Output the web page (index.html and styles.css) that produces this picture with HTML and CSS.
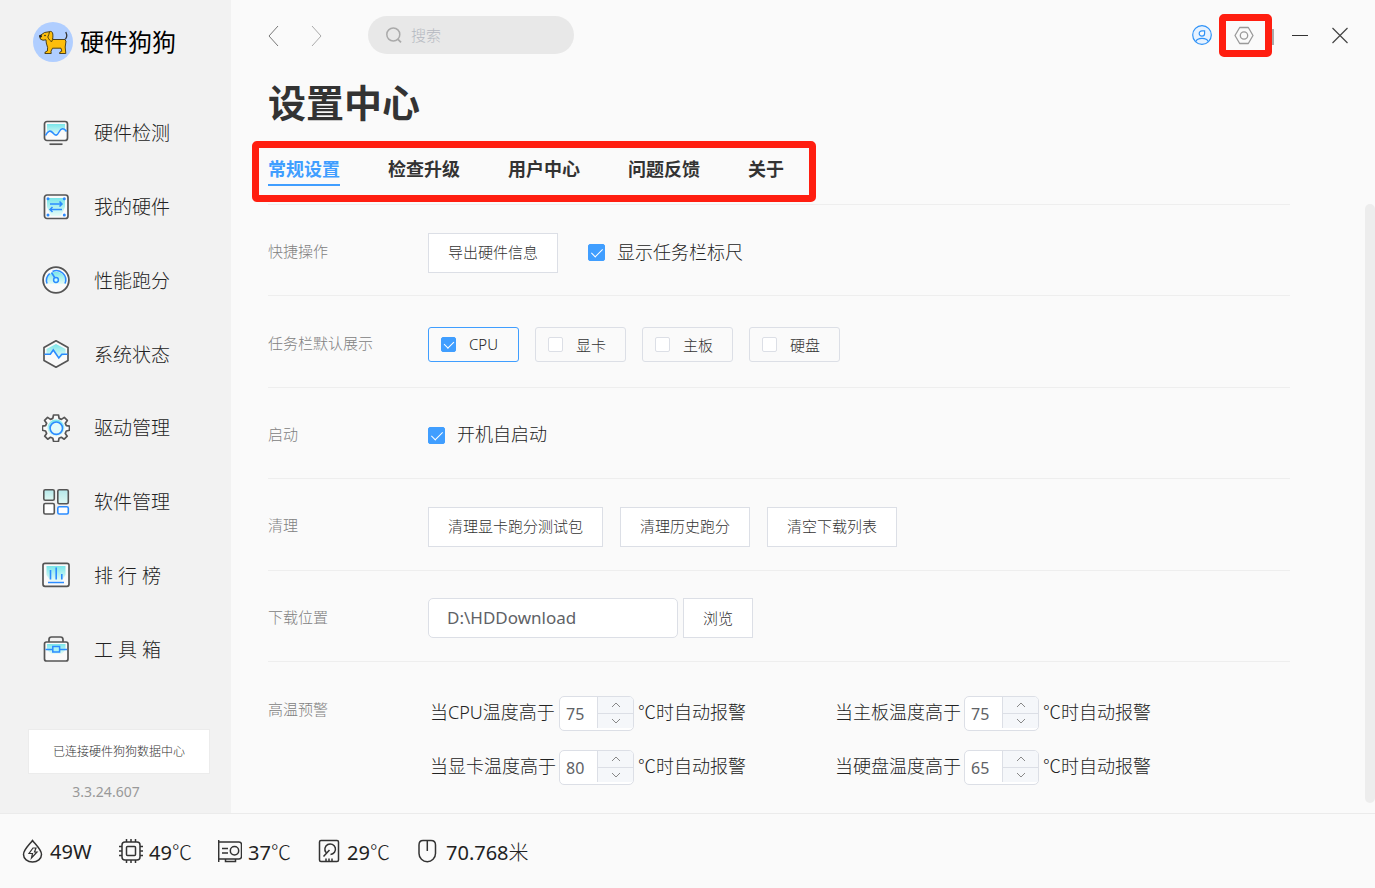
FILE: index.html
```html
<!DOCTYPE html>
<html lang="zh-CN">
<head>
<meta charset="utf-8">
<title>硬件狗狗</title>
<link rel="stylesheet" href="styles.css">
</head>
<body>
<svg class="defs" width="0" height="0" aria-hidden="true">
  <defs>
    <linearGradient id="aqua" x1="0" y1="0" x2="0" y2="1">
      <stop offset="0" stop-color="#79e6ea"/>
      <stop offset="1" stop-color="#e6fbf6"/>
    </linearGradient>
    <linearGradient id="mint" x1="0" y1="0" x2="0" y2="1">
      <stop offset="0" stop-color="#b4e8ea"/>
      <stop offset="1" stop-color="#e0f8f2"/>
    </linearGradient>
  </defs>
</svg>
<div class="app">
  <aside class="sidebar">
    <div class="brand">
      <svg class="brand-logo" viewBox="0 0 40 40" aria-hidden="true">
        <circle cx="20" cy="20" r="20" fill="#b0ceff"/>
        <path d="M31 18c2.800-1 3.500-4.500 1.800-8" fill="none" stroke="#333" stroke-width="1.300"/>
        <path d="M6.500 14l5-3.500 5-.8L20 17.500h11.500l1.500 1.500-.8 6 .6 6.500h-6.300l.5-1.500 1.800-.8-.8-3h-8.500l-1.500 3 .2 2.300h-6.300l.3-1.500 2.200-1 .2-3.500-1.300-4.500-.3-3.200-3 .4-2.500-1z" fill="#fdbe0c" stroke="#3d3310" stroke-width=".9"/>
        <path d="M16.500 9.600c1.800-.6 3 .2 3.300 2.400.2 2.500.2 5-1 7.500-1.300 0-3-2-4-4.500 1-1.500 1.200-3.500 1.700-5.400z" fill="#fdbe0c" stroke="#3d3310" stroke-width=".9"/>
        <path d="M6 13.200l2.500-.4.500 2-2 1.200z" fill="#222"/>
        <circle cx="12" cy="13.500" r=".8" fill="#222"/>
      </svg>
      <span class="brand-name">硬件狗狗</span>
    </div>
    <nav class="menu">
      <a href="#" class="menu-item">
        <svg class="menu-icon" viewBox="0 0 28 28"><rect x="2.500" y="2.500" width="23" height="19" rx="2.500" fill="#fafafa" stroke="#555" stroke-width="1.700"/><path d="M5 5h18v8c-3-4-5-4-7 0s-4 4-6 1-4-2-5 0z" fill="url(#aqua)"/><path d="M3.500 16.500C6 11.500 8.500 11 11 14s4 3 6-1 5-4.500 7.500-.5" fill="none" stroke="#2b8cff" stroke-width="1.600"/><path d="M7.500 25.200h13" stroke="#555" stroke-width="1.700"/></svg>
        <span>硬件检测</span></a>
      <a href="#" class="menu-item">
        <svg class="menu-icon" viewBox="0 0 28 28"><rect x="2.500" y="2" width="23.500" height="23.500" rx="2.500" fill="#fafafa" stroke="#555" stroke-width="1.700"/><path d="M5 5h18v9l-4 9H9l-4-9z" fill="url(#aqua)"/><g fill="#2b8cff"><circle cx="6" cy="5.800" r="1.500"/><circle cx="22.300" cy="5.800" r="1.500"/><circle cx="6" cy="22" r="1.500"/><circle cx="22.300" cy="22" r="1.500"/></g><path d="M8 11h12M17.500 8.500L20 11l-2.500 2.500M20 16.500H8M10.500 14L8 16.500l2.500 2.500" fill="none" stroke="#2b8cff" stroke-width="1.500"/></svg>
        <span>我的硬件</span></a>
      <a href="#" class="menu-item">
        <svg class="menu-icon" viewBox="0 0 28 28"><circle cx="14" cy="14" r="12.900" fill="#fafafa" stroke="#555" stroke-width="1.800"/><path d="M4.500 18a9.800 9.800 0 1 1 19 0z" fill="url(#aqua)"/><path d="M5 17.500a9.300 9.300 0 0 1 2.700-10M10.500 5.500a9.300 9.300 0 0 1 12.500 12M9.500 6.500l3.300 5.200" fill="none" stroke="#2b8cff" stroke-width="1.600"/><circle cx="14" cy="14" r="2.400" fill="#cff" stroke="#2b8cff" stroke-width="1.500"/></svg>
        <span>性能跑分</span></a>
      <a href="#" class="menu-item">
        <svg class="menu-icon" viewBox="0 0 28 28"><path d="M14 .8l12 6.600v13.200l-12 6.600-12-6.600V7.400z" fill="#fafafa" stroke="#555" stroke-width="1.700" stroke-linejoin="round"/><path d="M14 4l9.500 5v5l-5 4-3-1-4-6-4 3h-3V9z" fill="url(#aqua)"/><path d="M2.500 14.200h5.800l3-4.200 5.500 8 3-3.800h5.700" fill="none" stroke="#2b8cff" stroke-width="1.600"/></svg>
        <span>系统状态</span></a>
      <a href="#" class="menu-item">
        <svg class="menu-icon" viewBox="0 0 28 28"><path d="M11.500 1h5l.6 3.400 2.300 1 2.900-2 3 3-2 2.900 1 2.300 3.200.6v4l-3.200.8-1 2.400 1.900 2.800-3 3-2.900-1.900-2.300 1-.6 3.200h-4.800l-.8-3.200-2.300-1-2.800 1.900-3-3 1.900-2.800-1-2.400-3.200-.8v-4l3.200-.6 1-2.300-2-2.900 3-3 2.900 2 2.300-1z" fill="#fafafa" stroke="#555" stroke-width="1.700" stroke-linejoin="round"/><circle cx="14" cy="14" r="8.500" fill="url(#aqua)"/><circle cx="14.300" cy="14.200" r="6.200" fill="#e2fafa" stroke="#2b8cff" stroke-width="1.600"/></svg>
        <span>驱动管理</span></a>
      <a href="#" class="menu-item">
        <svg class="menu-icon" viewBox="0 0 28 28"><g stroke="#555" stroke-width="1.600"><rect x="1.800" y="1.800" width="10.500" height="10.500" rx="1.500" fill="url(#mint)"/><rect x="15.800" y="1.800" width="10.500" height="14" rx="1.500" fill="url(#mint)"/><rect x="1.800" y="15.500" width="10.500" height="10.500" rx="1.500" fill="#fff"/></g><rect x="15.800" y="18.800" width="10.500" height="7.200" rx="1.500" fill="#fff" stroke="#2b8cff" stroke-width="1.600"/></svg>
        <span>软件管理</span></a>
      <a href="#" class="menu-item">
        <svg class="menu-icon" viewBox="0 0 28 28"><rect x="1" y="2.300" width="26" height="23" rx="2" fill="#fafafa" stroke="#555" stroke-width="1.700"/><path d="M4.500 5h19v9l-4 6h-11l-4-6z" fill="url(#aqua)"/><path d="M8.500 9v9.500M14.200 6.500v12M19.800 13v5.500M6 21.500h16" stroke="#2b8cff" stroke-width="1.600"/></svg>
        <span>排 行 榜</span></a>
      <a href="#" class="menu-item">
        <svg class="menu-icon" viewBox="0 0 28 28"><path d="M7 7V4.500Q7 2 9.500 2h9Q21 2 21 4.500V7" fill="none" stroke="#555" stroke-width="1.700"/><rect x="2.500" y="7" width="23.500" height="19" rx="2" fill="#fafafa" stroke="#555" stroke-width="1.700"/><path d="M5 9h18.500v6l-4 4h-10L5 15z" fill="url(#aqua)"/><path d="M3.500 14.500h7M17.500 14.500H25" stroke="#2b8cff" stroke-width="1.500"/><rect x="10.800" y="11.500" width="6.800" height="5.500" fill="#aef3f3" stroke="#2b8cff" stroke-width="1.500"/></svg>
        <span>工 具 箱</span></a>
    </nav>
    <div class="link-state">
      <div class="link-card">已连接硬件狗狗数据中心</div>
      <div class="version">3.3.24.607</div>
    </div>
  </aside>

  <main class="main">
    <header class="topbar">
      <button class="icon-button" aria-label="后退"><svg width="12" height="22" viewBox="0 0 12 22"><path d="M10 2L1 12l9 10" fill="none" stroke="#777" stroke-width="1"/></svg></button>
      <button class="icon-button forward" aria-label="前进"><svg width="12" height="22" viewBox="0 0 12 22"><path d="M1 2l9 10-9 10" fill="none" stroke="#aaa" stroke-width="1"/></svg></button>
      <label class="search">
        <svg width="16" height="16" viewBox="0 0 16 16"><circle cx="7.300" cy="7.500" r="6.500" fill="none" stroke="#aaa" stroke-width="1.500"/><path d="M12 12.300l3 3" stroke="#aaa" stroke-width="1.700"/></svg>
        <input type="text" placeholder="搜索" aria-label="搜索">
      </label>
      <div class="window-tools">
        <button class="icon-button user" aria-label="用户"><svg width="20" height="20" viewBox="0 0 20 20"><circle cx="10" cy="10" r="9.300" fill="#e6f2ff" stroke="#2f92f7" stroke-width="1.200"/><path d="M12.600 5.800v2.700a2.700 2.700 0 1 1-2.700-2.700z" fill="#fafafa" stroke="#2f92f7" stroke-width="1.200"/><path d="M3.800 16.500c1.500-4.300 10.900-4.300 12.400 0" fill="none" stroke="#2f92f7" stroke-width="1.200"/></svg></button>
        <span class="settings-wrap">
          <button class="icon-button" aria-label="设置"><svg width="20" height="20" viewBox="0 0 20 20"><path d="M5.700 2.500h8.600l4.700 8-4.700 8H5.700l-4.700-8z" fill="none" stroke="#999" stroke-width="1.300" stroke-linejoin="round"/><circle cx="10" cy="10.500" r="3.700" fill="none" stroke="#999" stroke-width="1.300"/></svg></button>
        </span>
        <span class="divider"></span>
        <button class="icon-button minimize" aria-label="最小化"><svg width="18" height="18" viewBox="0 0 18 18"><path d="M1 9.500h16" stroke="#333"/></svg></button>
        <button class="icon-button" aria-label="关闭"><svg width="18" height="18" viewBox="0 0 18 18"><path d="M1.500 2l15 15M16.500 2l-15 15" stroke="#444" stroke-width="1.200"/></svg></button>
      </div>
    </header>
    <h1 class="title">设置中心</h1>
    <nav class="tabs">
      <a href="#" class="tab active">常规设置</a>
      <a href="#" class="tab">检查升级</a>
      <a href="#" class="tab">用户中心</a>
      <a href="#" class="tab">问题反馈</a>
      <a href="#" class="tab">关于</a>
    </nav>
    <div class="scroll-area">
      <div class="settings">
        <section class="row">
          <h2 class="row-label">快捷操作</h2>
          <div class="row-body">
            <button class="btn">导出硬件信息</button>
            <label class="check ruler"><input type="checkbox" checked><span>显示任务栏标尺</span></label>
          </div>
        </section>
        <section class="row">
          <h2 class="row-label">任务栏默认展示</h2>
          <div class="row-body chips">
            <label class="chip selected"><input type="checkbox" checked>CPU</label>
            <label class="chip"><input type="checkbox">显卡</label>
            <label class="chip"><input type="checkbox">主板</label>
            <label class="chip"><input type="checkbox">硬盘</label>
          </div>
        </section>
        <section class="row">
          <h2 class="row-label">启动</h2>
          <div class="row-body">
            <label class="check"><input type="checkbox" checked><span>开机自启动</span></label>
          </div>
        </section>
        <section class="row">
          <h2 class="row-label">清理</h2>
          <div class="row-body cleanup">
            <button class="btn">清理显卡跑分测试包</button>
            <button class="btn">清理历史跑分</button>
            <button class="btn">清空下载列表</button>
          </div>
        </section>
        <section class="row">
          <h2 class="row-label">下载位置</h2>
          <div class="row-body download">
            <input class="path" type="text" value="D:\HDDownload" aria-label="下载位置">
            <button class="btn">浏览</button>
          </div>
        </section>
        <section class="row alarm-row">
          <h2 class="row-label">高温预警</h2>
          <div class="alarms">
            <div class="alarm"><label for="cpu">当CPU温度高于</label><span class="stepper"><input id="cpu" type="number" value="75"><span class="steps"><button aria-label="增加"><svg viewBox="0 0 10 6"><path d="M1 5l4-4 4 4"/></svg></button><button aria-label="减少"><svg viewBox="0 0 10 6"><path d="M1 1l4 4 4-4"/></svg></button></span></span><span class="suffix">℃时自动报警</span></div>
            <div class="alarm"><label for="board">当主板温度高于</label><span class="stepper"><input id="board" type="number" value="75"><span class="steps"><button aria-label="增加"><svg viewBox="0 0 10 6"><path d="M1 5l4-4 4 4"/></svg></button><button aria-label="减少"><svg viewBox="0 0 10 6"><path d="M1 1l4 4 4-4"/></svg></button></span></span><span class="suffix">℃时自动报警</span></div>
            <div class="alarm"><label for="gpu">当显卡温度高于</label><span class="stepper"><input id="gpu" type="number" value="80"><span class="steps"><button aria-label="增加"><svg viewBox="0 0 10 6"><path d="M1 5l4-4 4 4"/></svg></button><button aria-label="减少"><svg viewBox="0 0 10 6"><path d="M1 1l4 4 4-4"/></svg></button></span></span><span class="suffix">℃时自动报警</span></div>
            <div class="alarm"><label for="disk">当硬盘温度高于</label><span class="stepper"><input id="disk" type="number" value="65"><span class="steps"><button aria-label="增加"><svg viewBox="0 0 10 6"><path d="M1 5l4-4 4 4"/></svg></button><button aria-label="减少"><svg viewBox="0 0 10 6"><path d="M1 1l4 4 4-4"/></svg></button></span></span><span class="suffix">℃时自动报警</span></div>
          </div>
        </section>
      </div>
      <div class="scrollbar"><div class="thumb"></div></div>
    </div>
  </main>

  <footer class="status">
    <div class="stat"><svg viewBox="0 0 24 24"><path d="M12.500 1.500C10.500 4.500 3.500 10.500 3.500 15.500a9 7.500 0 0 0 18 0C21.500 10.500 14.500 4.500 12.500 1.500z"/><path d="M13 9h3l-1.500 4H17l-5.500 6 1-4.500H9z" stroke-width="1.200"/></svg><span>49W</span></div>
    <div class="stat"><svg viewBox="0 0 24 24"><rect x="3" y="3" width="18" height="18" rx="3"/><rect x="7.500" y="7.500" width="9" height="9" rx="1"/><path d="M7.500 0v3M12 0v3M16.500 0v3M7.500 21v3M12 21v3M16.500 21v3M0 7.500h3M0 12h3M0 16.500h3M21 7.500h3M21 12h3M21 16.500h3"/></svg><span>49<span class="unit">℃</span></span></div>
    <div class="stat"><svg viewBox="0 0 24 24"><path d="M.7 1v22M.7 3H21q2.500 0 2.500 2.500v12Q23.500 20 21 20H.7M7.500 20v2.500h10V20M4 9.500h6M4 14h6"/><circle cx="16.500" cy="11.700" r="4.200"/></svg><span>37<span class="unit">℃</span></span></div>
    <div class="stat"><svg viewBox="0 0 24 24"><rect x="2.500" y="1.500" width="19" height="21" rx="1.500"/><path d="M9 13.500a5.300 5.300 0 1 1 4.500 2M12.500 11L6.500 17.500M9 19.500v3M12 19.500v3M15 19.500v3"/></svg><span>29<span class="unit">℃</span></span></div>
    <div class="stat"><svg viewBox="0 0 24 24"><path d="M7 1.500h8q4.500 0 4.500 4.500v8.500a8.200 8.200 0 0 1-16.500 0V6Q3 1.500 7 1.500zM11.300 2v10"/></svg><span>70.768<span class="unit">米</span></span></div>
  </footer>
</div>
</body>
</html>
```
FILE: styles.css
```css
* { box-sizing: border-box; }

body {
  margin: 0;
  color: #222;
  background: #fafafa;
  font-family: "Noto Sans", "Noto Sans CJK SC", sans-serif;
  font-size: 15px;
  font-weight: 300;
}

.defs { display: block; }
button, input { font: inherit; color: inherit; }
button { cursor: pointer; }
a { color: inherit; text-decoration: none; }
svg { flex: none; display: block; }

.app {
  display: grid;
  grid-template-columns: 231px 1fr;
  grid-template-rows: 1fr 75px;
  min-height: 100vh;
}

/* Sidebar */
.sidebar {
  display: flex;
  flex-direction: column;
  background: #f2f2f2;
}
.brand {
  display: flex;
  align-items: center;
  gap: 7px;
  height: 96px;
  padding: 0 0 12px 33px;
}
.brand-logo { width: 40px; height: 40px; }
.brand-name {
  padding-bottom: 4px;
  color: #000;
  font-size: 24px;
  font-weight: 400;
}
.menu {
  flex: 1;
  display: grid;
  grid-auto-rows: 1fr;
}
.menu-item {
  display: flex;
  align-items: center;
  gap: 24px;
  padding-left: 42px;
  font-size: 19px;
}
.menu-item span { padding-bottom: 1px; }
.menu-icon { width: 28px; height: 28px; }
.link-state {
  height: 127px;
  padding: 43px 21px 0 28px;
}
.link-card {
  height: 45px;
  border: 1px solid #ececec;
  background: #fff;
  color: #333;
  font-size: 12px;
  line-height: 43px;
  text-align: center;
}
.version {
  padding-right: 26px;
  color: #999;
  font-size: 14px;
  font-weight: 400;
  line-height: 36px;
  text-align: center;
}

/* Main area */
.main {
  display: flex;
  flex-direction: column;
  min-width: 0;
  padding-left: 37px;
}
.topbar {
  display: flex;
  align-items: center;
  height: 70px;
  padding-right: 26px;
}
.icon-button {
  display: block;
  padding: 0;
  border: 0;
  background: none;
}
.forward { margin-left: 31px; }
.search {
  display: flex;
  align-items: center;
  gap: 9px;
  width: 206px;
  height: 38px;
  margin-left: 45px;
  padding: 0 18px;
  border-radius: 19px;
  background: #e8e8e8;
}
.search input {
  width: 100%;
  padding: 0;
  border: 0;
  outline: 0;
  background: none;
}
.search input::placeholder { color: #b4b8c0; }
.window-tools {
  display: flex;
  align-items: center;
  margin-left: auto;
}
.user { margin-right: 22px; }
.settings-wrap { position: relative; }
.settings-wrap::after {
  content: "";
  position: absolute;
  inset: -11px -18px -12px -15px;
  border: 7px solid #ff1e10;
  border-radius: 5px;
  pointer-events: none;
}
.divider {
  width: 2px;
  height: 16px;
  margin: 4px 17px 0 18px;
  background: #aaa;
}
.minimize { margin-right: 22px; }
.title {
  margin: 0;
  color: #333;
  font-size: 38px;
  font-weight: 700;
  line-height: 64px;
}
.tabs {
  position: relative;
  display: flex;
  gap: 48px;
  align-self: flex-start;
  height: 70px;
  padding-top: 18px;
}
.tabs::after {
  content: "";
  position: absolute;
  inset: 7px -32px 2px -16px;
  border: 7px solid #ff1e10;
  border-radius: 5px;
  pointer-events: none;
}
.tab {
  height: 34px;
  color: #333;
  font-size: 18px;
  font-weight: 700;
  line-height: 34px;
}
.tab.active {
  color: #409eff;
  border-bottom: 2px solid #409eff;
}

/* Settings */
.scroll-area { flex: 1; display: flex; }
.settings {
  flex: 1;
  display: grid;
  grid-template-rows: repeat(5, minmax(80px, 1fr)) 152px;
}
.row {
  display: flex;
  align-items: center;
  padding-top: 5px;
  border-top: 1px solid #eee;
}
.row-label {
  flex: none;
  width: 160px;
  margin: 0;
  padding-bottom: 4px;
  color: #808080;
  font-size: 15px;
  font-weight: 300;
}
.row-body { display: flex; align-items: center; }
.btn {
  height: 40px;
  padding: 0 19px 2px;
  border: 1px solid #dcdfe6;
  background: #fff;
  color: #333;
}
.cleanup { gap: 17px; }
.download { gap: 5px; }
.chips { gap: 16px; }
.ruler { margin-left: 30px; }
.check {
  display: flex;
  align-items: center;
  gap: 12px;
  font-size: 18px;
}
.check span { padding-bottom: 4px; }
input[type="checkbox"] {
  appearance: none;
  display: grid;
  justify-content: center;
  width: 17px;
  height: 17px;
  margin: 0;
  border: 1px solid #dcdfe6;
  border-radius: 2px;
  background: #fff;
}
input[type="checkbox"]:checked {
  border-color: #409eff;
  background: #409eff;
}
input[type="checkbox"]:checked::after {
  content: "";
  width: 5px;
  height: 10px;
  margin-top: 1px;
  border: solid #fff;
  border-width: 0 1px 1px 0;
  rotate: 45deg;
}
.chip {
  display: flex;
  align-items: center;
  gap: 13px;
  width: 91px;
  height: 35px;
  padding-left: 12px;
  border: 1px solid #dcdfe6;
  border-radius: 3px;
  color: #333;
}
.chip input[type="checkbox"] { width: 15px; height: 15px; }
.chip input[type="checkbox"]:checked::after { height: 8px; }
.chip.selected { border-color: #409eff; color: #222; }
.path {
  width: 250px;
  height: 40px;
  padding: 0 18px 2px;
  border: 1px solid #dcdfe6;
  border-radius: 5px;
  background: #fff;
  color: #606266;
  font-size: 17px;
  font-weight: 400;
}

.alarm-row { align-items: flex-start; padding-top: 34px; }
.alarm-row .row-label { line-height: 26px; }
.alarms {
  display: grid;
  grid-template-columns: 405px auto;
  row-gap: 19px;
  padding-left: 2px;
}
.alarm {
  display: flex;
  align-items: center;
  gap: 4px;
  height: 35px;
  font-size: 18px;
  white-space: nowrap;
}
.alarm label { width: 125px; padding-bottom: 5px; }
.suffix {
  padding-bottom: 5px;
  font-family: "Noto Sans CJK SC", sans-serif;
}
.stepper {
  display: flex;
  width: 75px;
  height: 35px;
  overflow: hidden;
  border: 1px solid #dcdfe6;
  border-radius: 5px;
  background: #fff;
}
.stepper input {
  appearance: textfield;
  width: 37px;
  padding: 0 0 0 6px;
  border: 0;
  outline: 0;
  background: none;
  color: #606266;
  font-size: 16px;
  font-weight: 400;
}
.stepper input::-webkit-inner-spin-button { appearance: none; }
.steps {
  flex: 1;
  display: grid;
  grid-template-rows: 1fr 1fr;
  padding-bottom: 2px;
}
.steps button {
  display: grid;
  place-items: center;
  padding: 0;
  border: 0;
  border-left: 1px solid #dcdfe6;
  background: #f5f7fa;
}
.steps button + button { border-top: 1px solid #dcdfe6; }
.steps svg {
  width: 10px;
  height: 6px;
  fill: none;
  stroke: #888;
}

.scrollbar {
  width: 10px;
  margin-left: 75px;
  padding-bottom: 10px;
}
.thumb {
  height: 100%;
  border-radius: 5px;
  background: #ededed;
}

/* Status bar */
.status {
  grid-column: 1 / -1;
  display: flex;
  align-items: center;
  padding-left: 20px;
  border-top: 1px solid #ebebeb;
  font-size: 20px;
  font-weight: 400;
}
.stat {
  display: flex;
  align-items: center;
  gap: 6px;
  min-width: 99px;
}
.stat svg {
  width: 24px;
  height: 24px;
  fill: none;
  stroke: #333;
  stroke-width: 1.5;
}
.unit {
  font-family: "Noto Sans CJK SC", sans-serif;
  font-weight: 300;
}
```
